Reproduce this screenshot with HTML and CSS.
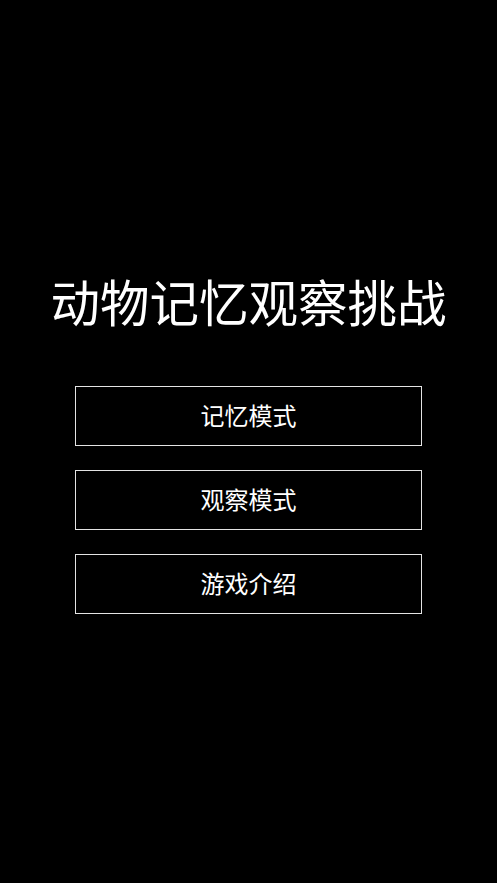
FILE: index.html
```html
<!DOCTYPE html>
<html lang="zh-CN">
<head>
<meta charset="utf-8">
<title>动物记忆观察挑战</title>
<link rel="stylesheet" href="styles.css">
</head>
<body>
<main class="screen">
  <h1 class="title">动物记忆观察挑战</h1>
  <nav class="menu">
    <button class="menu-btn">记忆模式</button>
    <button class="menu-btn">观察模式</button>
    <button class="menu-btn">游戏介绍</button>
  </nav>
</main>
</body>
</html>
```
FILE: styles.css
```css
html, body {
  margin: 0;
  padding: 0;
  background: #000;
  height: 100%;
}
body {
  font-family: "Noto Sans CJK SC", "Noto Sans", sans-serif;
  color: #fff;
}
.screen {
  display: flex;
  flex-direction: column;
  align-items: center;
  padding-top: 276px;
}
.title {
  margin: 0;
  font-size: 49.5px;
  line-height: 50px;
  font-weight: 400;
  color: #fff;
}
.menu {
  display: flex;
  flex-direction: column;
  gap: 24px;
  margin-top: 60px;
}
.menu-btn {
  box-sizing: border-box;
  width: 347px;
  height: 60px;
  padding: 0 0 2px;
  background: #000;
  border: 1px solid #e4e4e4;
  color: #fff;
  font-family: "Noto Sans CJK SC", "Noto Sans", sans-serif;
  font-size: 24px;
  line-height: 1;
  margin: 0;
  border-radius: 0;
}
```
